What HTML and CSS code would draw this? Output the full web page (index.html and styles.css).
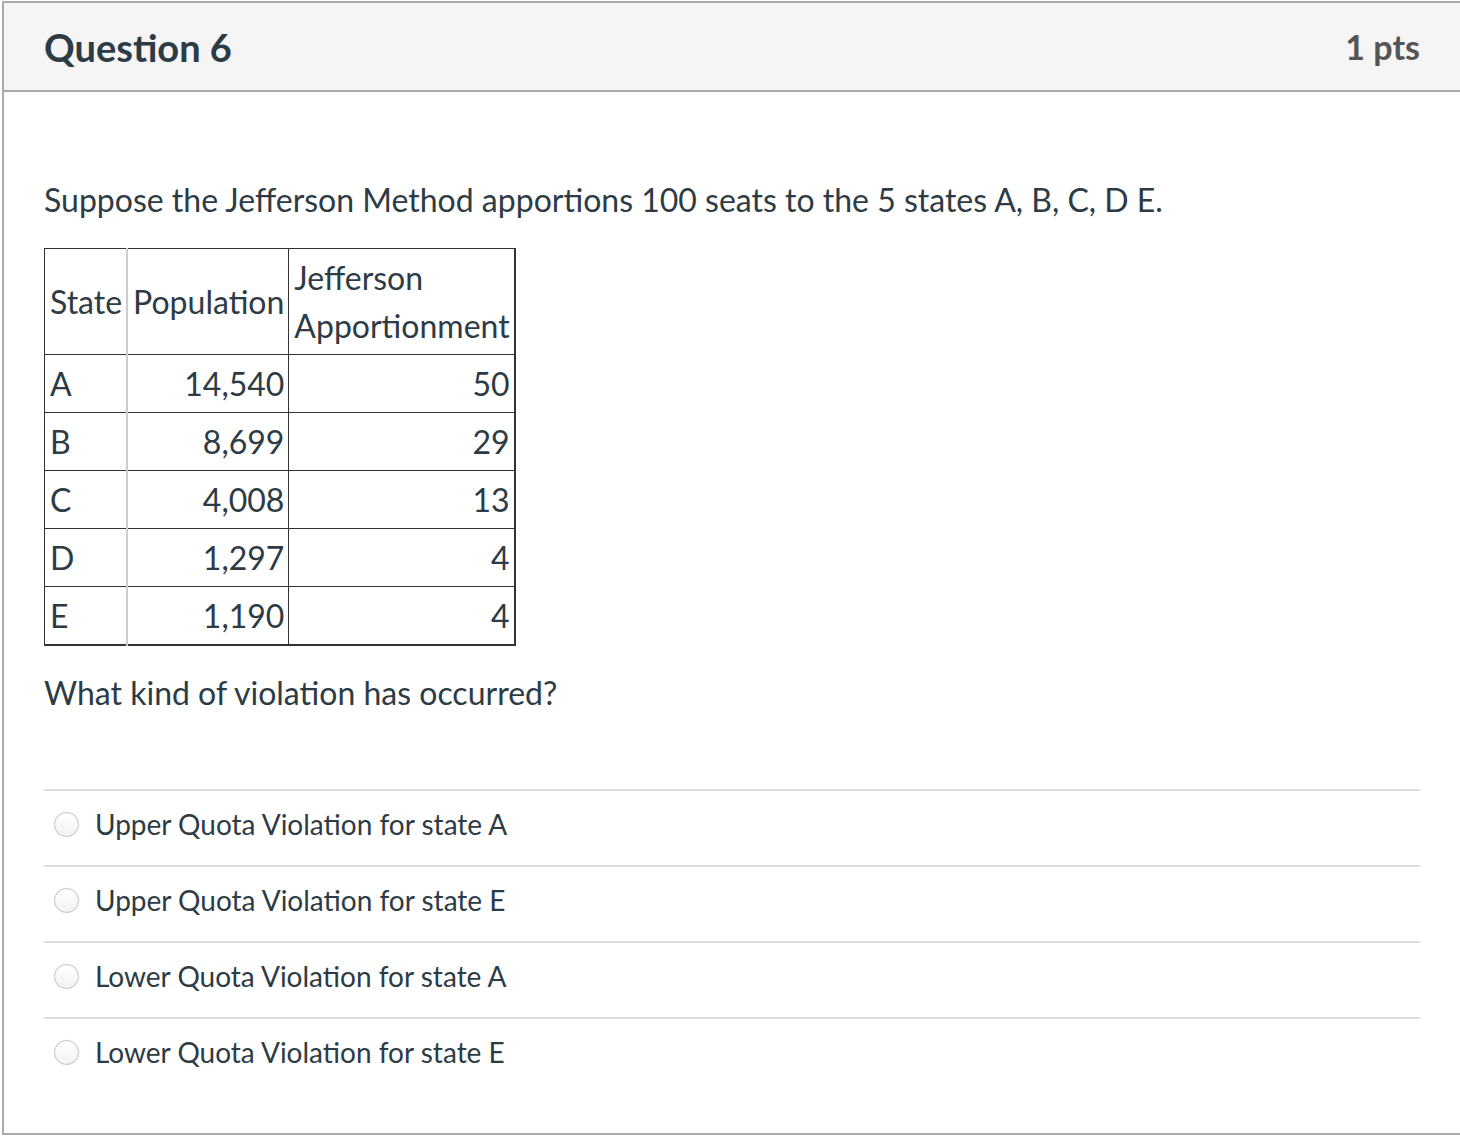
FILE: index.html
```html
<!DOCTYPE html>
<html>
<head>
<meta charset="utf-8">
<link rel="stylesheet" href="styles.css">
</head>
<body>
<div class="question">
  <div class="header">
    <div class="title">Question 6</div>
    <div class="pts">1 pts</div>
  </div>
  <div class="content">
    <p class="text">Suppose the Jefferson Method apportions 100 seats to the 5 states A, B, C, D E.</p>
    <table class="data">
      <tr class="head">
        <td class="c1">State</td>
        <td class="c2">Population</td>
        <td class="c3">Jefferson<br>Apportionment</td>
      </tr>
      <tr><td class="c1">A</td><td class="c2 num">14,540</td><td class="c3 num">50</td></tr>
      <tr><td class="c1">B</td><td class="c2 num">8,699</td><td class="c3 num">29</td></tr>
      <tr><td class="c1">C</td><td class="c2 num">4,008</td><td class="c3 num">13</td></tr>
      <tr><td class="c1">D</td><td class="c2 num">1,297</td><td class="c3 num">4</td></tr>
      <tr><td class="c1">E</td><td class="c2 num">1,190</td><td class="c3 num">4</td></tr>
    </table>
    <p class="ask">What kind of violation has occurred?</p>
    <div class="answers">
      <label class="answer"><span class="radio"></span><span class="label">Upper Quota Violation for state A</span></label>
      <label class="answer"><span class="radio"></span><span class="label">Upper Quota Violation for state E</span></label>
      <label class="answer"><span class="radio"></span><span class="label">Lower Quota Violation for state A</span></label>
      <label class="answer"><span class="radio"></span><span class="label">Lower Quota Violation for state E</span></label>
    </div>
  </div>
</div>
</body>
</html>
```
FILE: styles.css
```css
html, body {
  margin: 0;
  padding: 0;
  background: #fff;
}
body {
  font-family: Lato, "Noto Sans", sans-serif;
  color: #2d3b45;
}
.question {
  margin: 1px 0 0 2px;
  border: 2px solid #aaaaaa;
  border-right: none;
  height: 1134px;
  box-sizing: border-box;
}
.header {
  height: 87px;
  background: #f5f5f5;
  border-bottom: 2px solid #aaaaaa;
  display: flex;
  align-items: center;
  justify-content: space-between;
  padding: 0 40px 0 40px;
}
.title {
  font-size: 38px;
  font-weight: 700;
  color: #2d3b45;
}
.pts {
  font-size: 34px;
  font-weight: 700;
  color: #555555;
}
.content {
  padding: 0 40px;
}
.text {
  margin: 84px 0 0 0;
  font-size: 32px;
  line-height: 48px;
}
.data {
  margin-top: 24px;
  border-collapse: collapse;
  border-left: 1px solid #333;
  border-top: 1px solid #333;
  border-right: 2px solid #333;
  border-bottom: 2px solid #333;
  font-size: 32px;
}
.data td {
  padding: 5px 4px 4px 5px;
  line-height: 48px;
  border-bottom: 1px solid #333;
  vertical-align: middle;
}
.data tr:last-child td {
  border-bottom: none;
}
.data .c1 {
  border-right: 2px solid #cccccc;
}
.data .c2 {
  border-right: 1px solid #333;
}
.data .num {
  text-align: right;
}
.ask {
  margin: 23px 0 0 0;
  font-size: 32px;
  line-height: 48px;
}
.answers {
  margin-top: 72px;
}
.answer {
  display: flex;
  align-items: center;
  height: 66px;
  padding-bottom: 8px;
  border-top: 2px solid #dddddd;
  padding-left: 10px;
  font-size: 28px;
}
.radio {
  width: 23px;
  height: 23px;
  border-radius: 50%;
  border: 1px solid #c4c4c4;
  background: linear-gradient(#ffffff, #f2f2f2);
  box-shadow: 0 0 1px rgba(0,0,0,0.15);
  margin-right: 16px;
  flex: none;
}
.label {
  color: #2d3b45;
}
```
